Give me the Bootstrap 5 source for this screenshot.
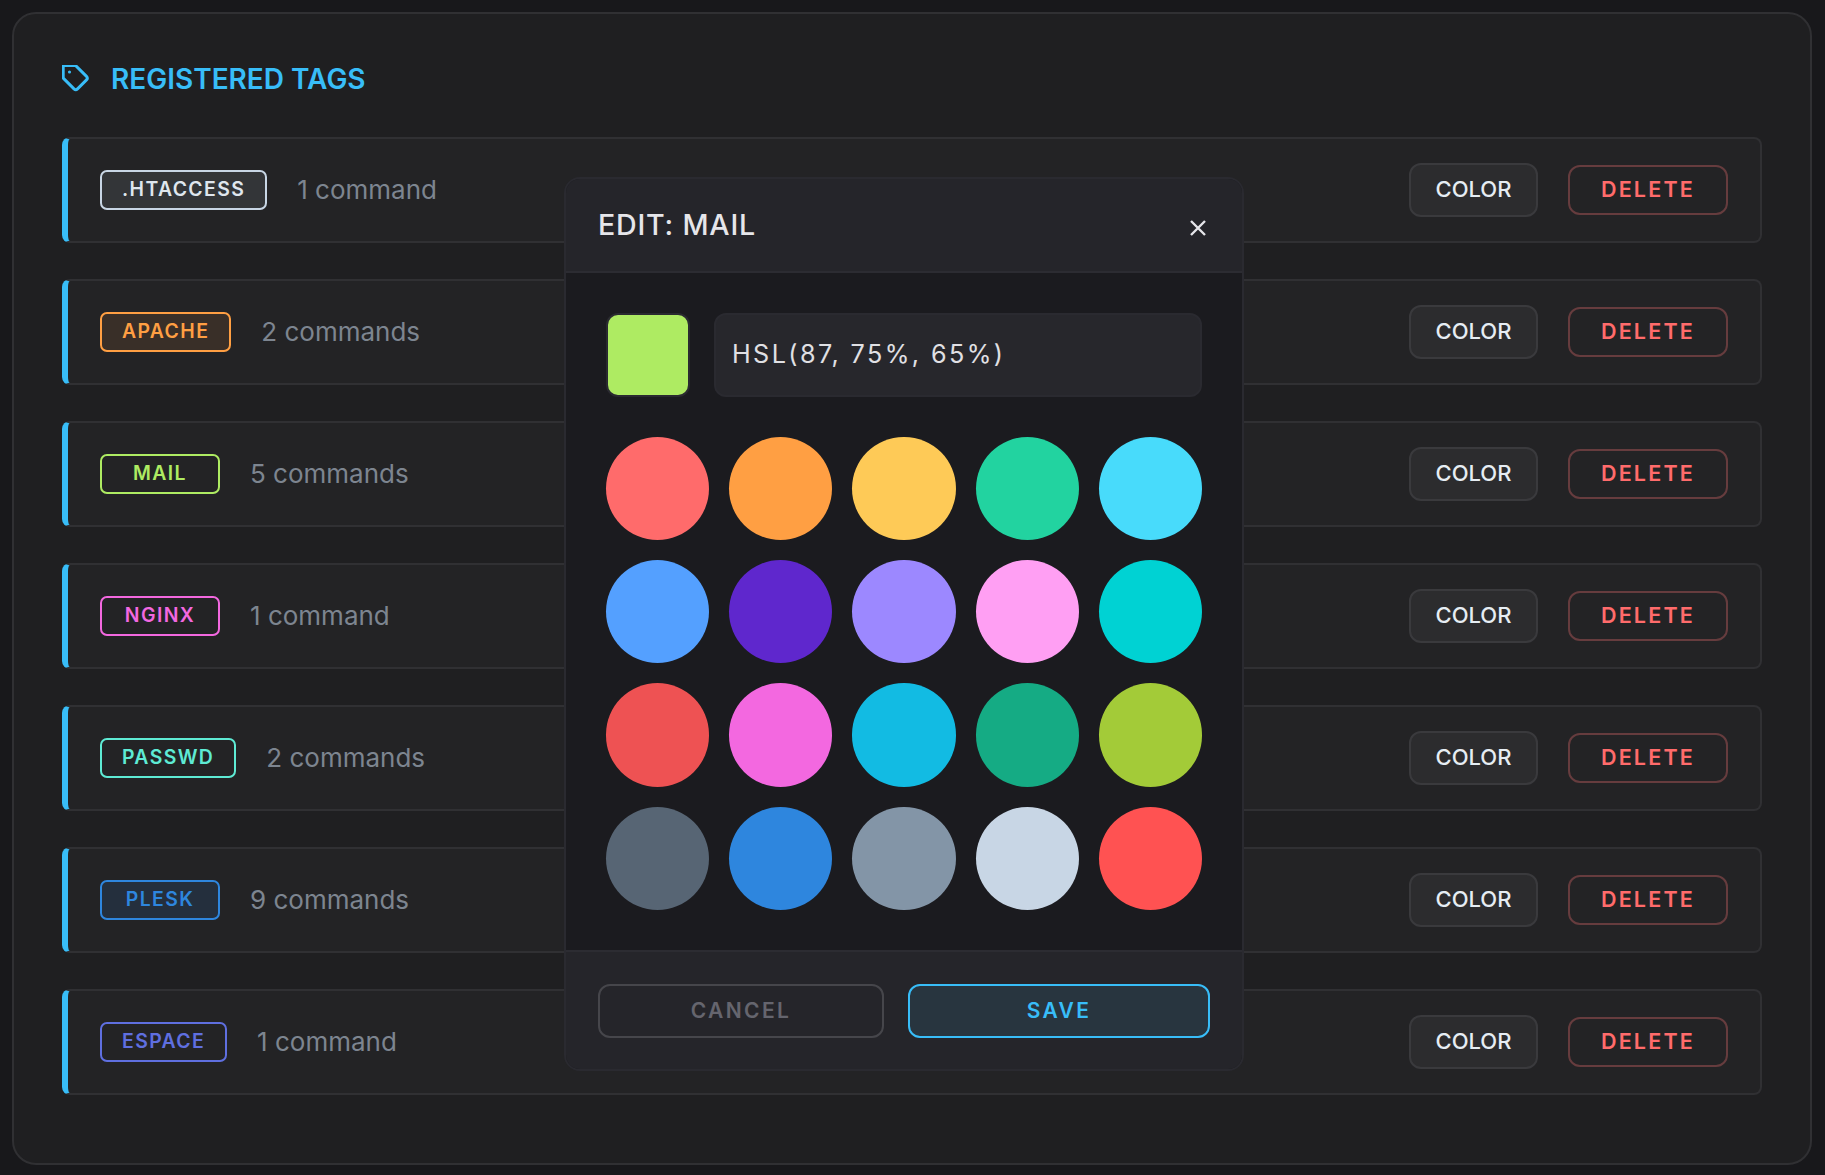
<!DOCTYPE html>
<html lang="en">
<head>
<meta charset="utf-8">
<title>Registered tags</title>
<link href="https://cdn.jsdelivr.net/npm/bootstrap@5.3.0/dist/css/bootstrap.min.css" rel="stylesheet">
<style>
html,body{height:100%}
body{background:#18181b;font-family:Inter,"Liberation Sans",sans-serif;padding:12px 13px 12px 12px;overflow:hidden}
.shell{position:relative;height:1153px;background:#1f1f21;border:2px solid #303033;border-radius:24px;padding:38px 48px 0}
.shell-title{height:56px;margin-bottom:29px;gap:19px;color:#38bdf8;font-size:28px;font-weight:600;margin-top:0}
.shell-title svg{width:30px;height:30px;flex:none}
.tag-rows{gap:36px}
.tag-row{height:106px;background:#232325;border:2px solid #303033;border-left:6px solid #38bdf8;border-radius:8px;padding:0 32px}
.tag-pill{height:40px;min-width:120px;padding:0 20px;border:2px solid currentColor;border-radius:7px;font-size:19.4px;font-weight:600;letter-spacing:1.4px;margin-right:30px;justify-content:center}
.tag-tint{background:rgba(200,214,229,.1)}
.tag-warm{background:rgba(255,159,67,.1)}
.tag-blue{background:rgba(46,134,222,.13)}
.tag-count{color:#7d8590;font-size:26px;font-weight:400;margin-bottom:2px}
.act-btn{font-weight:500;border-radius:12px;padding:0 0 2px;display:flex;align-items:center;justify-content:center}
.act-color{width:129px;height:54px;background:#2c2c2e;border:2px solid #3a3a3d;color:#e6edf3;font-size:22px}
.act-delete{width:160px;height:50px;margin-left:30px;background:transparent;border:2px solid #663c3e;color:#ff6b6b;font-size:21.5px;font-weight:600;letter-spacing:2.2px}
.edit-box{position:absolute;left:550px;top:163px;width:680px;height:894px;background:#1b1b1f;border:2px solid #2a2a30;border-radius:16px;color:#e6e6ea;overflow:hidden}
.edit-head{height:94px;flex:none;background:#25252a;border-bottom:2px solid #2c2c32;padding:0 32px}
.edit-title{font-size:28.6px;font-weight:500;letter-spacing:.8px;margin:1px 0 0}
.edit-x{background:none;border:0;padding:0;color:#e6e6ea;line-height:0;margin:6px 3px 0 0}
.edit-body{height:677px;flex:none;padding:40px}
.swatch-now{width:84px;height:84px;background:#aeeb62;border:2px solid #2a2a30;border-radius:12px;margin-right:24px;flex:none}
.hsl-field{height:84px;flex:1;background:#27272c;border:2px solid #2a2a30;border-radius:12px;padding:0 16px;font-size:25.2px;letter-spacing:2.4px;color:#e0e0e4}
.swatch-grid{display:grid;grid-template-columns:repeat(5,1fr);gap:20px;margin-top:40px}
.swatch-dot{aspect-ratio:1;border-radius:50%}
.edit-foot{flex:1;background:#25252a;border-top:2px solid #2c2c32;padding:32px 32px 31px;gap:24px}
.foot-btn{height:54px;font-size:21px;font-weight:600;letter-spacing:2.4px;border-radius:12px;padding:0;display:flex;align-items:center;justify-content:center}
.foot-cancel{width:286px;background:transparent;border:2px solid #46464b;color:#65656e}
.foot-save{width:302px;background:#28353f;border:2px solid #38bdf8;color:#38bdf8}
</style>
</head>
<body>
<div class="shell">
  <h2 class="shell-title d-flex align-items-center">
    <svg viewBox="1 1.5 24 24" fill="none" stroke="#38bdf8" stroke-width="2.3" stroke-linecap="round" stroke-linejoin="round"><path d="M20.6 13.4l-7.2 7.2a2 2 0 0 1-2.8 0L2 12V2h10l8.6 8.6a2 2 0 0 1 0 2.8z"/><circle cx="7" cy="7" r=".7" fill="#38bdf8" stroke-width="1"/></svg>
    <span>REGISTERED TAGS</span>
  </h2>
  <div class="tag-rows d-flex flex-column">
    <div class="tag-row d-flex align-items-center">
      <span class="tag-pill tag-tint d-inline-flex align-items-center" style="color:#c8d6e5"><span style="color:#dfe6ee">.HTACCESS</span></span><span class="tag-count">1 command</span>
      <button class="btn act-btn act-color ms-auto">COLOR</button><button class="btn act-btn act-delete">DELETE</button>
    </div>
    <div class="tag-row d-flex align-items-center">
      <span class="tag-pill tag-warm d-inline-flex align-items-center" style="color:#ff9f43">APACHE</span><span class="tag-count">2 commands</span>
      <button class="btn act-btn act-color ms-auto">COLOR</button><button class="btn act-btn act-delete">DELETE</button>
    </div>
    <div class="tag-row d-flex align-items-center">
      <span class="tag-pill d-inline-flex align-items-center" style="color:#aeeb62">MAIL</span><span class="tag-count">5 commands</span>
      <button class="btn act-btn act-color ms-auto">COLOR</button><button class="btn act-btn act-delete">DELETE</button>
    </div>
    <div class="tag-row d-flex align-items-center">
      <span class="tag-pill d-inline-flex align-items-center" style="color:#f368e0">NGINX</span><span class="tag-count">1 command</span>
      <button class="btn act-btn act-color ms-auto">COLOR</button><button class="btn act-btn act-delete">DELETE</button>
    </div>
    <div class="tag-row d-flex align-items-center">
      <span class="tag-pill d-inline-flex align-items-center" style="color:#5eead4">PASSWD</span><span class="tag-count">2 commands</span>
      <button class="btn act-btn act-color ms-auto">COLOR</button><button class="btn act-btn act-delete">DELETE</button>
    </div>
    <div class="tag-row d-flex align-items-center">
      <span class="tag-pill tag-blue d-inline-flex align-items-center" style="color:#2e86de">PLESK</span><span class="tag-count">9 commands</span>
      <button class="btn act-btn act-color ms-auto">COLOR</button><button class="btn act-btn act-delete">DELETE</button>
    </div>
    <div class="tag-row d-flex align-items-center">
      <span class="tag-pill d-inline-flex align-items-center" style="color:#5f6fe0">ESPACE</span><span class="tag-count">1 command</span>
      <button class="btn act-btn act-color ms-auto">COLOR</button><button class="btn act-btn act-delete">DELETE</button>
    </div>
  </div>
  <div class="edit-box d-flex flex-column">
    <div class="edit-head d-flex align-items-center justify-content-between">
      <h3 class="edit-title">EDIT: MAIL</h3>
      <button class="edit-x" aria-label="Close"><svg width="18" height="18" viewBox="0 0 18 18" fill="none" stroke="currentColor" stroke-width="2.4"><path d="M2 2l14 14M16 2L2 16"/></svg></button>
    </div>
    <div class="edit-body">
      <div class="d-flex">
        <div class="swatch-now"></div>
        <div class="hsl-field d-flex align-items-center">HSL(87, 75%, 65%)</div>
      </div>
      <div class="swatch-grid">
        <div class="swatch-dot" style="background:#ff6b6b"></div><div class="swatch-dot" style="background:#ff9f43"></div><div class="swatch-dot" style="background:#feca57"></div><div class="swatch-dot" style="background:#22d3a0"></div><div class="swatch-dot" style="background:#48dbfb"></div>
        <div class="swatch-dot" style="background:#54a0ff"></div><div class="swatch-dot" style="background:#5f27cd"></div><div class="swatch-dot" style="background:#9c88ff"></div><div class="swatch-dot" style="background:#ff9ff3"></div><div class="swatch-dot" style="background:#00d2d3"></div>
        <div class="swatch-dot" style="background:#ee5253"></div><div class="swatch-dot" style="background:#f368e0"></div><div class="swatch-dot" style="background:#12bbe3"></div><div class="swatch-dot" style="background:#15ab84"></div><div class="swatch-dot" style="background:#a3cb38"></div>
        <div class="swatch-dot" style="background:#576574"></div><div class="swatch-dot" style="background:#2e86de"></div><div class="swatch-dot" style="background:#8395a7"></div><div class="swatch-dot" style="background:#c8d6e5"></div><div class="swatch-dot" style="background:#ff5252"></div>
      </div>
    </div>
    <div class="edit-foot d-flex">
      <button class="btn foot-btn foot-cancel">CANCEL</button>
      <button class="btn foot-btn foot-save">SAVE</button>
    </div>
  </div>
</div>
<script src="https://cdn.jsdelivr.net/npm/bootstrap@5.3.0/dist/js/bootstrap.bundle.min.js"></script>
</body>
</html>
